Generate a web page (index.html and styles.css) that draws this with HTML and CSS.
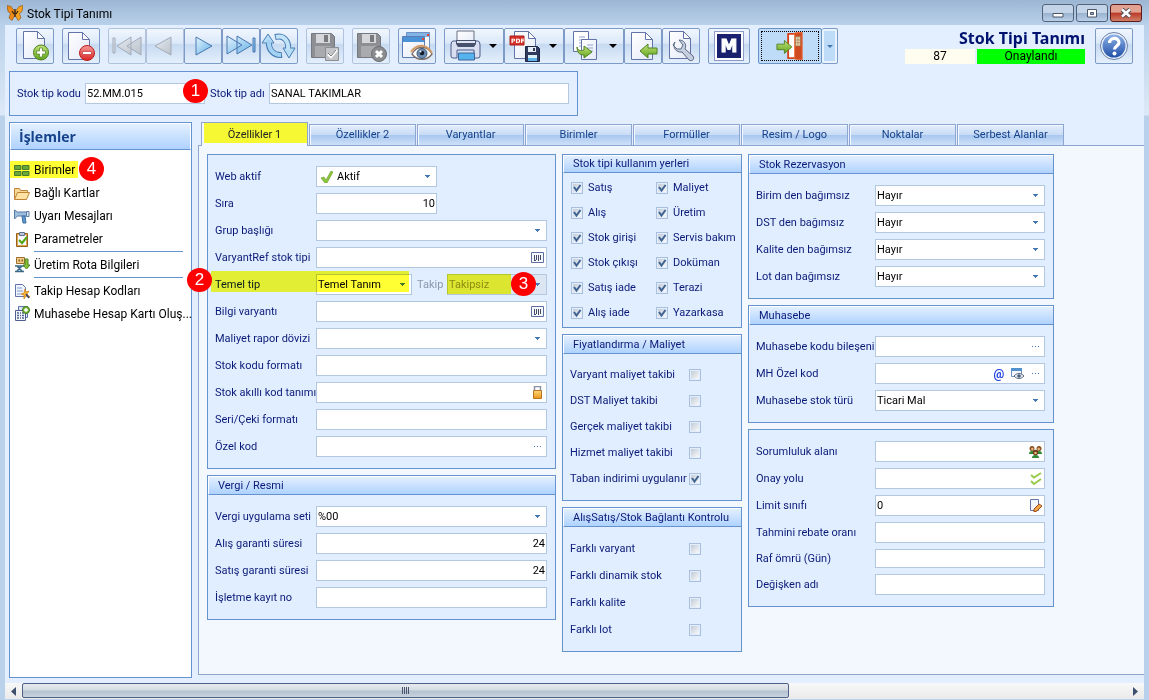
FILE: index.html
```html
<!DOCTYPE html>
<html lang="tr">
<head>
<meta charset="utf-8">
<title>Stok Tipi Tanımı</title>
<link rel="stylesheet" href="styles.css">
</head>
<body>
<svg class="defs" aria-hidden="true">
  <defs>
    <linearGradient id="g-blue" x1="0" y1="0" x2="1" y2="1"><stop offset="0" stop-color="#e4f4fd"/><stop offset="1" stop-color="#5eaee6"/></linearGradient>
    <linearGradient id="g-gray" x1="0" y1="0" x2="1" y2="1"><stop offset="0" stop-color="#e8edf3"/><stop offset="1" stop-color="#b9c1ca"/></linearGradient>
    <linearGradient id="g-page" x1="0" y1="0" x2="1" y2="1"><stop offset="0" stop-color="#fff"/><stop offset="1" stop-color="#e3e9f6"/></linearGradient>
    <linearGradient id="g-green" x1="0" y1="0" x2="0" y2="1"><stop offset="0" stop-color="#c4e27a"/><stop offset="1" stop-color="#5fa31c"/></linearGradient>
    <linearGradient id="g-red" x1="0" y1="0" x2="0" y2="1"><stop offset="0" stop-color="#f79a9a"/><stop offset="1" stop-color="#d92424"/></linearGradient>
    <linearGradient id="g-help" x1="0" y1="0" x2="0" y2="1"><stop offset="0" stop-color="#8fb2e6"/><stop offset="1" stop-color="#1f4fa8"/></linearGradient>
    <linearGradient id="g-gold" x1="0" y1="0" x2="0" y2="1"><stop offset="0" stop-color="#ffd97a"/><stop offset="1" stop-color="#e8941a"/></linearGradient>
    <symbol id="page" viewBox="0 0 22 28"><path d="M.5.5h14l7 7v20H.5z" fill="url(#g-page)" stroke="#6373a8"/><path d="M14.500.5v7h7z" fill="#fff" stroke="#6373a8"/></symbol>
    <symbol id="floppy" viewBox="0 0 24 25"><path d="M.5.5h20l3 3v21H.5z" fill="#8d8f94" stroke="#77797e"/><path d="M5 1h14v9H5z" fill="#d5d7da"/><path d="M13 2h4v7h-4z" fill="#77797e"/><path d="M4 13h16v11H4z" fill="#a8aaae"/></symbol>
    <symbol id="barcode" viewBox="0 0 13 12"><path d="M.5.5h12v10H.5z" fill="#f5f8fd" stroke="#5f6fa5"/><path d="M3.500 3v5M5.500 3v5M7.500 3v5M9.500 3v5" stroke="#444a68"/><path d="M3 8.500h2M7 8.500h1" stroke="#444a68"/></symbol>
    <symbol id="dots" viewBox="0 0 9 3"><path d="M1 1h1v1H1zM4 1h1v1H4zM7 1h1v1H7z" fill="#4a78b4"/></symbol>
  </defs>
</svg>

<div class="window">
  <header class="titlebar">
    <svg class="logo" width="16" height="16" viewBox="0 0 16 16"><path d="M7.500 6L4 1.500 0 .5l1 6 2.500 2L2 13l3 2.500L7.500 11z" fill="#ef8b17" stroke="#8c4a08" stroke-width=".6"/><path d="M8.500 6L12 1.500l4-1-1 6-2.500 2L14 13l-3 2.500L8.500 11z" fill="#f7a321" stroke="#8c4a08" stroke-width=".6"/><path d="M8 4v8M5 6l2 3M11 6L9 9" stroke="#3a220c" stroke-width="1.300"/></svg>
    <h1>Stok Tipi Tanımı</h1>
    <div class="caption-buttons">
      <button type="button" aria-label="Simge durumuna küçült"><svg width="30" height="16" viewBox="0 0 30 16"><path d="M10 8.500h10v3.500H10z" fill="#fff" stroke="#4d5768"/></svg></button>
      <button type="button" aria-label="Önceki boyut"><svg width="30" height="16" viewBox="0 0 30 16"><path d="M10.500 4.500h9v7.500h-9z" fill="#fff" stroke="#4d5768"/><path d="M13.500 7.500h3v2h-3z" fill="#9db4d0" stroke="#4d5768"/></svg></button>
      <button type="button" class="close" aria-label="Kapat"><svg width="30" height="16" viewBox="0 0 30 16"><path d="M11 4.500l8 7M19 4.500l-8 7" stroke="#54505a" stroke-width="4.500"/><path d="M11 4.500l8 7M19 4.500l-8 7" stroke="#fff" stroke-width="2.500"/></svg></button>
    </div>
  </header>

  <div class="client">
    <div class="toolbar">
      <div class="group">
        <button type="button" aria-label="Yeni"><svg viewBox="0 0 36 34"><use href="#page" x="6" y="2" width="22" height="28"/><circle cx="24" cy="23.500" r="7.500" fill="url(#g-green)" stroke="#4c7f1c"/><path d="M22.500 19h3v3h3v3h-3v3h-3v-3h-3v-3h3z" fill="#fff" stroke="#4c7f1c" stroke-width=".7"/></svg></button>
      </div>
      <div class="group">
        <button type="button" aria-label="Sil"><svg viewBox="0 0 36 34"><use href="#page" x="5" y="3" width="22" height="28"/><circle cx="24" cy="24" r="7.500" fill="url(#g-red)" stroke="#b81e1e"/><path d="M19.500 22.500h9v3h-9z" fill="#fff" stroke="#b81e1e" stroke-width=".6"/></svg></button>
      </div>
      <div class="group">
        <button type="button" disabled aria-label="İlk"><svg viewBox="0 0 36 34"><g fill="url(#g-gray)" stroke="#a3abb8"><path d="M4 9h2v15H4zM22 8v18L8 17zM32 8v18l-14-9z"/></g></svg></button>
        <button type="button" disabled aria-label="Önceki"><svg viewBox="0 0 36 34"><path d="M24 8v18L8 17z" fill="url(#g-gray)" stroke="#a3abb8"/></svg></button>
        <button type="button" aria-label="Sonraki"><svg viewBox="0 0 36 34"><path d="M11 8v18l16-9z" fill="url(#g-blue)" stroke="#4a77b0"/></svg></button>
        <button type="button" aria-label="Son"><svg viewBox="0 0 36 34"><g fill="url(#g-blue)" stroke="#4a77b0"><path d="M4 7v18l15-9zM14 7v18l15-9zM30 9h2v14h-2z"/></g></svg></button>
        <button type="button" aria-label="Yenile"><svg viewBox="0 0 36 34"><path d="M8 12c-1 9 5 15 13 14" fill="none" stroke="#4a7fb4" stroke-width="6"/><path d="M14 8c9-2 14 4 13 12" fill="none" stroke="#4a7fb4" stroke-width="6"/><path d="M7 5l6 9H1zM28 29l-6-10h12z" fill="#b5dcf5" stroke="#4a7fb4"/><path d="M8 11c-1 10 5 15 12 15" fill="none" stroke="#a3d2f2" stroke-width="4"/><path d="M15 8c8-2 13 4 12 13" fill="none" stroke="#c3e4f8" stroke-width="4"/></svg></button>
      </div>
      <div class="group">
        <button type="button" disabled aria-label="Kaydet"><svg viewBox="0 0 36 34"><use href="#floppy" x="4" y="4" width="24" height="25"/><path d="M18.500 18.500h13v13h-13z" fill="#c2c4c8" stroke="#8b8d92"/><path d="M21 25l3 3 6-7" fill="none" stroke="#fff" stroke-width="2.500"/><path d="M21 24l3 3 5-6" fill="none" stroke="#777"/></svg></button>
      </div>
      <div class="group">
        <button type="button" disabled aria-label="Kaydetme"><svg viewBox="0 0 36 34"><use href="#floppy" x="4" y="4" width="24" height="25"/><circle cx="26" cy="25" r="7.500" fill="#8a8c90" stroke="#6c6e72"/><path d="M23 22l6 6M29 22l-6 6" stroke="#fff" stroke-width="3"/></svg></button>
      </div>
      <div class="group">
        <button type="button" aria-label="Görünüm"><svg viewBox="0 0 36 34"><path d="M7.500 3.500h23V24h-23z" fill="#f5f9ff" stroke="#6d8fc4"/><path d="M8 4h22v4H8z" fill="#83b4e6"/><path d="M3.500 7.500h22v21h-22z" fill="url(#g-page)" stroke="#5a7bb4"/><path d="M4 8h21v5H4z" fill="#4b92d6"/><path d="M28 5h2v2h-2zM23 9h2v2h-2z" fill="#e4452a"/><path d="M13 25c5-9 15-9 20 0-5 7-15 7-20 0z" fill="#fff" stroke="#7b6c67" stroke-width="1.300"/><path d="M12 23c6-9 16-8 21 1" fill="none" stroke="#d39a61" stroke-width="1.800"/><circle cx="23" cy="24.500" r="5" fill="#6d8cb0" stroke="#3b5778"/><circle cx="23" cy="24" r="2.300" fill="#111c2c"/><circle cx="21.500" cy="22.500" r="1" fill="#fff"/></svg></button>
      </div>
      <div class="group">
        <button type="button" class="wide" aria-label="Yazdır"><svg viewBox="0 0 36 34"><path d="M11 2h17v14H11z" fill="url(#g-page)" stroke="#6a6f80"/><path d="M7 12q-2 0-2 4v11q0 2 2 2h4v-8h17v8h4q2 0 2-2V16q0-4-2-4h-3l-2 4H13l-3-4z" fill="#d9dff0" stroke="#4c5a88"/><path d="M10 11h20v4l-2 3H12l-2-3z" fill="#47516e"/><path d="M11 12h18v2H11z" fill="#dfe4f0"/><path d="M12.500 24h16v7h-16z" fill="#55b4ed" stroke="#426399"/></svg><i class="arrow"></i></button>
        <button type="button" class="wide" aria-label="PDF kaydet"><svg viewBox="0 0 36 34"><use href="#page" x="8" y="2" width="22" height="28"/><path d="M4 7h14v9H4z" fill="#d7322a" stroke="#a91d18"/><text x="5" y="14" class="pdf">PDF</text><path d="M19.500 17.500h12l2 2v13h-14z" fill="#2f3a5e" stroke="#1e2747"/><path d="M22 18h8v5h-8z" fill="#e6edf7"/><path d="M27 19h2v3h-2z" fill="#2f3a5e"/><path d="M22 26h9v6h-9z" fill="#d9f0fb"/><path d="M22 29h9v3h-9z" fill="#5fb5e8"/></svg><i class="arrow"></i></button>
        <button type="button" class="wide" aria-label="Kopyala"><svg viewBox="0 0 36 34"><path d="M7.500 2.500h15v20h-15z" fill="#fff" stroke="#6373a8"/><path d="M13 8h6M13 11h6M13 14h6M13 17h6" stroke="#8fa4cf"/><path d="M15.500 10.500h15v20h-15z" fill="url(#g-page)" stroke="#6373a8"/><path d="M21 16h6M21 19h6M21 22h6" stroke="#8fa4cf"/><path d="M11 18c1 4 4 4 7 3v-4l8 6-8 6v-3c-5 0-7-3-7-8z" fill="url(#g-green)" stroke="#4f8222"/></svg><i class="arrow"></i></button>
        <button type="button" aria-label="İçeri al"><svg viewBox="0 0 36 34"><use href="#page" x="6" y="3" width="22" height="28"/><path d="M15 22l8-7v4h9v6h-9v4z" fill="url(#g-green)" stroke="#4f8222"/></svg></button>
        <button type="button" aria-label="Ayarlar"><svg viewBox="0 0 36 34"><use href="#page" x="6" y="2" width="22" height="28"/><path d="M12 13c-3 5 1 11 7 10l7 8c3 2 6-1 4-4l-8-7c2-5-1-9-6-9l4 5-2 4-4 0-4-4z" fill="#c5cfdf" stroke="#5b6885"/></svg></button>
      </div>
      <div class="group">
        <button type="button" class="m-button" aria-label="Modül"><span>M</span></button>
      </div>
      <div class="group exit">
        <button type="button" class="door" aria-label="Çıkış"><svg viewBox="0 0 56 30"><path d="M26 2h14v26H26z" fill="#fff" stroke="#d7441a" stroke-width="2"/><path d="M33 1l8-1v30l-8-1z" fill="#cf4a20" stroke="#e86b3a"/><path d="M34 5h5v10h-5z" fill="#f0d9b6" stroke="#9a7a50" stroke-width=".7"/><path d="M36.500 5v10M34 8.500h5M34 11.500h5" stroke="#9a7a50" stroke-width=".7"/><path d="M14 13h8V9l8 7-8 7v-4h-8z" fill="url(#g-green)" stroke="#4f8222"/></svg></button>
        <button type="button" class="drop" aria-label="Çıkış seçenekleri"><i class="arrow"></i></button>
      </div>
      <div class="heading">
        <h2>Stok Tipi Tanımı</h2>
        <div class="status"><span class="number">87</span><span class="approved">Onaylandı</span></div>
      </div>
      <button type="button" class="help" aria-label="Yardım"><svg viewBox="0 0 36 34"><circle cx="18" cy="17" r="13.500" fill="#e9f1fc" stroke="#6a7fa6"/><circle cx="18" cy="17" r="11.500" fill="url(#g-help)"/><path d="M13.500 14c0-6 9.500-6 9.500-.5 0 3.500-4.500 3.500-4.500 7" fill="none" stroke="#fff" stroke-width="3.200"/><circle cx="18.500" cy="24.500" r="2" fill="#fff"/></svg></button>
    </div>

    <div class="keys">
      <label for="kod">Stok tip kodu</label>
      <div class="field code"><input id="kod" type="text" value="52.MM.015"><b class="marker m1">1</b></div>
      <label for="ad">Stok tip adı</label>
      <div class="field"><input id="ad" type="text" value="SANAL TAKIMLAR"></div>
    </div>

    <div class="main">
      <nav class="sidebar">
        <h2>İşlemler</h2>
        <ul>
          <li><a href="#" class="marked"><svg width="16" height="16" viewBox="0 0 16 16"><path d="M.5 3.500h6.500v4H.5zM8.500 3.500H15v4H8.500zM.5 9.500h6.500v4H.5zM8.500 9.500H15v4H8.500z" fill="#67a839" stroke="#4a7a2c"/></svg>Birimler</a><b class="marker m4">4</b></li>
          <li><a href="#"><svg width="16" height="16" viewBox="0 0 16 16"><path d="M.5 14V3.500h5l1 2h7V8" fill="#f7d99a" stroke="#bd8436"/><path d="M.5 14.500l3-7h12l-3 7z" fill="#ffe2a4" stroke="#bd8436"/></svg>Bağlı Kartlar</a></li>
          <li><a href="#"><svg width="16" height="16" viewBox="0 0 16 16"><path d="M.5 2v9l3-3h9V4h-9z" fill="#9dbfe0" stroke="#587ba4"/><path d="M12.500 3.500H15v5h-2.500z" fill="#dce8f4" stroke="#587ba4"/><path d="M8 8l1 7h3l-1-7z" fill="#5a9ad4" stroke="#3f6ea0"/></svg>Uyarı Mesajları</a></li>
          <li><a href="#"><svg width="16" height="16" viewBox="0 0 16 16"><path d="M2.500 2.500h11v13h-11z" fill="#dfa750" stroke="#94611e"/><path d="M4 4h8v10H4z" fill="#f6f8ff"/><path d="M5.500 1.500h5v3h-5z" fill="#bac6dc" stroke="#65708a"/><path d="M5 9l3 3 5-6" fill="none" stroke="#55a818" stroke-width="2.200"/></svg>Parametreler</a></li>
          <li class="split"><a href="#"><svg width="16" height="16" viewBox="0 0 16 16"><path d="M2.500.5h8v6h-8z" fill="#f1cf8a" stroke="#9b6c2c"/><path d="M4.500 2.500h1.500v2H4.500zM7.500 2.500H9v2H7.500z" fill="#8b5c22"/><path d="M1 9h9M1 14.500h9M3 9l5 5M8 9l-5 5" stroke="#3a6a88" stroke-width="1.500"/><path d="M11 2h3v6h2l-3.500 4L9 8h2z" fill="#86c034" stroke="#4f8222"/></svg>Üretim Rota Bilgileri</a></li>
          <li class="split"><a href="#"><svg width="16" height="16" viewBox="0 0 16 16"><path d="M1.500 1.500h7l3 3v9h-10z" fill="#f0f4ff" stroke="#6373a8"/><path d="M3 5h5M3 8h6M3 11h4" stroke="#7f9bd0"/><path d="M11 6l1 3 3-1-2 3 3 3-4-1-2 3v-4l-3-1 3-1z" fill="#ffb733" stroke="#c77813" stroke-width=".7"/><path d="M12 11l3 4" stroke="#30406f" stroke-width="1.500"/></svg>Takip Hesap Kodları</a></li>
          <li><a href="#"><svg width="16" height="16" viewBox="0 0 16 16"><path d="M4.500.5h9v11h-9z" fill="#dbe4f5" stroke="#6373a8"/><path d="M1.500 4.500h10v10h-10z" fill="#f3f6fd" stroke="#50608e"/><path d="M3 7h2M6 7h1M8 7h2M3 9.500h2M6 9.500h1M8 9.500h2M3 12h2M6 12h1M8 12h2" stroke="#53648f" stroke-width="1.300"/><circle cx="12" cy="4" r="3.500" fill="#79ba39" stroke="#467a1d"/><path d="M12 2v4M10 4h4" stroke="#fff" stroke-width="1.300"/></svg>Muhasebe Hesap Kartı Oluş...</a></li>
        </ul>
      </nav>

      <div class="tabs">
        <div class="tablist" role="tablist">
          <button type="button" role="tab" class="active" aria-selected="true">Özellikler 1</button>
          <button type="button" role="tab">Özellikler 2</button>
          <button type="button" role="tab">Varyantlar</button>
          <button type="button" role="tab">Birimler</button>
          <button type="button" role="tab">Formüller</button>
          <button type="button" role="tab">Resim / Logo</button>
          <button type="button" role="tab">Noktalar</button>
          <button type="button" role="tab">Serbest Alanlar</button>
        </div>

        <form class="pane" role="tabpanel">
          <div class="column">
            <section class="panel first">
              <div class="row short"><label for="web">Web aktif</label><div class="field"><svg class="tick" width="12" height="12" viewBox="0 0 12 12"><path d="M0 7l3-1 2 3L10 0l2 1-6 11H4z" fill="#8cc63f" stroke="#6a9c2c" stroke-width=".6"/></svg><select id="web"><option>Aktif</option></select></div></div>
              <div class="row short"><label for="sira">Sıra</label><div class="field"><input id="sira" class="number" type="text" value="10"></div></div>
              <div class="row"><label for="grup">Grup başlığı</label><div class="field"><select id="grup"><option></option></select></div></div>
              <div class="row"><label for="vref">VaryantRef stok tipi</label><div class="field"><input id="vref" type="text"><button type="button" aria-label="Seç"><svg width="13" height="12"><use href="#barcode"/></svg></button></div></div>
              <div class="row split-row"><label for="temel">Temel tip</label><div class="field base"><select id="temel"><option>Temel Tanım</option></select></div><label class="off" for="takip">Takip</label><div class="field disabled"><select id="takip" disabled><option>Takipsiz</option></select><b class="marker m3">3</b></div><b class="marker m2">2</b></div>
              <div class="row"><label for="bilgi">Bilgi varyantı</label><div class="field"><input id="bilgi" type="text"><button type="button" aria-label="Seç"><svg width="13" height="12"><use href="#barcode"/></svg></button></div></div>
              <div class="row"><label for="doviz">Maliyet rapor dövizi</label><div class="field"><select id="doviz"><option></option></select></div></div>
              <div class="row"><label for="format">Stok kodu formatı</label><div class="field"><input id="format" type="text"></div></div>
              <div class="row"><label for="akilli">Stok akıllı kod tanımı</label><div class="field"><input id="akilli" type="text"><button type="button" aria-label="Kilit"><svg width="13" height="13" viewBox="0 0 13 13"><path d="M3.500 5V.5h6V5" fill="none" stroke="#8a93a5" stroke-width="1.500"/><path d="M2.500 4.500h8v8h-8z" fill="url(#g-gold)" stroke="#b87420"/></svg></button></div></div>
              <div class="row"><label for="seri">Seri/Çeki formatı</label><div class="field"><input id="seri" type="text"></div></div>
              <div class="row"><label for="ozel">Özel kod</label><div class="field"><input id="ozel" type="text"><button type="button" aria-label="Seç"><svg width="13" height="3" viewBox="-2 0 13 3"><use href="#dots" width="9" height="3"/></svg></button></div></div>
            </section>
            <section class="panel">
              <h3>Vergi / Resmi</h3>
              <div class="row"><label for="vergi">Vergi uygulama seti</label><div class="field"><select id="vergi"><option>%00</option></select></div></div>
              <div class="row"><label for="alisg">Alış garanti süresi</label><div class="field"><input id="alisg" class="number" type="text" value="24"></div></div>
              <div class="row"><label for="satisg">Satış garanti süresi</label><div class="field"><input id="satisg" class="number" type="text" value="24"></div></div>
              <div class="row"><label for="isletme">İşletme kayıt no</label><div class="field"><input id="isletme" type="text"></div></div>
            </section>
          </div>

          <div class="column">
            <section class="panel usage">
              <h3>Stok tipi kullanım yerleri</h3>
              <div class="checks">
                <label><input type="checkbox" checked>Satış</label>
                <label><input type="checkbox" checked>Maliyet</label>
                <label><input type="checkbox" checked>Alış</label>
                <label><input type="checkbox" checked>Üretim</label>
                <label><input type="checkbox" checked>Stok girişi</label>
                <label><input type="checkbox" checked>Servis bakım</label>
                <label><input type="checkbox" checked>Stok çıkışı</label>
                <label><input type="checkbox" checked>Doküman</label>
                <label><input type="checkbox" checked>Satış iade</label>
                <label><input type="checkbox" checked>Terazi</label>
                <label><input type="checkbox" checked>Alış iade</label>
                <label><input type="checkbox" checked>Yazarkasa</label>
              </div>
            </section>
            <section class="panel pricing">
              <h3>Fiyatlandırma / Maliyet</h3>
              <div class="options">
                <label><span>Varyant maliyet takibi</span><input type="checkbox"></label>
                <label><span>DST Maliyet takibi</span><input type="checkbox"></label>
                <label><span>Gerçek maliyet takibi</span><input type="checkbox"></label>
                <label><span>Hizmet maliyet takibi</span><input type="checkbox"></label>
                <label><span>Taban indirimi uygulanır</span><input type="checkbox" checked></label>
              </div>
            </section>
            <section class="panel">
              <h3>AlışSatış/Stok Bağlantı Kontrolu</h3>
              <div class="options">
                <label><span>Farklı varyant</span><input type="checkbox"></label>
                <label><span>Farklı dinamik stok</span><input type="checkbox"></label>
                <label><span>Farklı kalite</span><input type="checkbox"></label>
                <label><span>Farklı lot</span><input type="checkbox"></label>
              </div>
            </section>
          </div>

          <div class="column right">
            <section class="panel">
              <h3>Stok Rezervasyon</h3>
              <div class="row"><label for="birim">Birim den bağımsız</label><div class="field"><select id="birim"><option>Hayır</option></select></div></div>
              <div class="row"><label for="dst">DST den bağımsız</label><div class="field"><select id="dst"><option>Hayır</option></select></div></div>
              <div class="row"><label for="kalite">Kalite den bağımsız</label><div class="field"><select id="kalite"><option>Hayır</option></select></div></div>
              <div class="row"><label for="lot">Lot dan bağımsız</label><div class="field"><select id="lot"><option>Hayır</option></select></div></div>
            </section>
            <section class="panel">
              <h3>Muhasebe</h3>
              <div class="row"><label for="bilesen">Muhasebe kodu bileşeni</label><div class="field"><input id="bilesen" type="text"><button type="button" aria-label="Seç"><svg width="13" height="3" viewBox="-2 0 13 3"><use href="#dots" width="9" height="3"/></svg></button></div></div>
              <div class="row"><label for="mh">MH Özel kod</label><div class="field"><input id="mh" type="text"><button type="button" class="at">@</button><button type="button" aria-label="Göster"><svg width="13" height="12" viewBox="0 0 13 12"><path d="M.5.5h10v8H.5z" fill="#f4f8ff" stroke="#6f8dbd"/><path d="M0 0h11v3H0z" fill="#5291cd"/><path d="M3 8c3-3.500 7-3.500 10 0-3 3.500-7 3.500-10 0z" fill="#dfe5ee" stroke="#626e80"/><circle cx="8" cy="8" r="1.800" fill="#48607f"/></svg></button><button type="button" aria-label="Seç"><svg width="13" height="3" viewBox="-2 0 13 3"><use href="#dots" width="9" height="3"/></svg></button></div></div>
              <div class="row"><label for="tur">Muhasebe stok türü</label><div class="field"><select id="tur"><option>Ticari Mal</option></select></div></div>
            </section>
            <section class="panel first">
              <div class="row"><label for="sorumlu">Sorumluluk alanı</label><div class="field"><input id="sorumlu" type="text"><button type="button" aria-label="Kişiler"><svg width="13" height="13" viewBox="0 0 13 13"><path d="M0 9q0-3 3-3t3 3zM7 9q0-3 3-3t3 3zM3 13q0-3 3.500-3t3.500 3z" fill="#2f8a35"/><circle cx="3" cy="3.500" r="2.500" fill="#8a5225"/><circle cx="10" cy="3.500" r="2.500" fill="#8a5225"/><circle cx="6.500" cy="7.500" r="2.700" fill="#6b3c17"/><circle cx="3.300" cy="4" r="1.200" fill="#e8b97e"/><circle cx="9.700" cy="4" r="1.200" fill="#e8b97e"/><circle cx="6.500" cy="8" r="1.300" fill="#e8b97e"/></svg></button></div></div>
              <div class="row"><label for="onay">Onay yolu</label><div class="field"><input id="onay" type="text"><button type="button" aria-label="Onay"><svg width="13" height="13" viewBox="0 0 13 13"><path d="M2 3l3 2.500L12 1M2 9l3 3 7-5" fill="none" stroke="#9acb4c" stroke-width="2"/></svg></button></div></div>
              <div class="row"><label for="limit">Limit sınıfı</label><div class="field"><input id="limit" type="text" value="0"><button type="button" aria-label="Düzenle"><svg width="13" height="13" viewBox="0 0 13 13"><path d="M1.500.5h8v11h-8z" fill="#f3f6ff" stroke="#6373a8"/><path d="M5 10l5-5 3 2-5 5-3 1z" fill="#f0a347" stroke="#9a4e1c"/></svg></button></div></div>
              <div class="row"><label for="rebate">Tahmini rebate oranı</label><div class="field"><input id="rebate" type="text"></div></div>
              <div class="row"><label for="raf">Raf ömrü (Gün)</label><div class="field low"><input id="raf" type="text"></div></div>
              <div class="row"><label for="degisken">Değişken adı</label><div class="field"><input id="degisken" type="text"></div></div>
            </section>
          </div>
        </form>
      </div>
    </div>

    <div class="scrollbar">
      <button type="button" aria-label="Sola kaydır"><svg width="5" height="9" viewBox="0 0 5 9"><path d="M5 0v9L0 4.500z" fill="#3f506e"/></svg></button>
      <div class="track"><div class="thumb"></div></div>
      <button type="button" aria-label="Sağa kaydır"><svg width="5" height="9" viewBox="0 0 5 9"><path d="M0 0v9l5-4.500z" fill="#3f506e"/></svg></button>
    </div>
  </div>
</div>
</body>
</html>
```
FILE: styles.css
```css
* { box-sizing: border-box; }
body { margin: 0; background: #B9D1EA; color: #0A1A78; font: 11px/14px Roboto, "Noto Sans", sans-serif; }
h1, h2, h3 { margin: 0; }
button, input, select { margin: 0; padding: 0; border: 0; border-radius: 0; background: none; color: inherit; font: inherit; }
button { display: flex; align-items: center; justify-content: center; }
svg { flex: none; display: block; }
.defs { position: absolute; width: 0; height: 0; }

.window { display: flex; flex-direction: column; min-height: 100vh; padding: 0 5px 1px; background: linear-gradient(#9CB6D3, #B9D1EA 25px, #DCE9F7 115px, #B9D1EA 116px); }
.titlebar { display: flex; align-items: center; height: 25px; padding: 0 2px; color: #000; }
.titlebar h1 { flex: 1; margin-left: 4px; padding-top: 2px; font-size: 12px; font-weight: normal; }
.caption-buttons { display: flex; gap: 2px; }
.caption-buttons button { width: 32px; height: 18px; border: 1px solid #53637A; border-radius: 3px; background: linear-gradient(#C3D4E8 48%, #98B1CD 50%, #B9D0E8); }
.caption-buttons .close { border-color: #5A1A1A; background: linear-gradient(#E3A192 45%, #BB3926 50%, #D0806A); }

.client { display: flex; flex: 1; flex-direction: column; background: #E3EFFF; }

.toolbar { display: flex; gap: 8px; padding: 3px 11px 0; }
.group { display: flex; }
.toolbar button { width: 38px; height: 36px; border: 1px solid #7D9BC6; border-radius: 2px; background: linear-gradient(#F0F6FE, #DCE9F9 42%, #C6DAF1 45%, #E4EFFC); }
.toolbar button svg { width: 36px; height: 34px; }
.toolbar button:disabled { border-color: #B0C2DC; }
.toolbar .wide { width: 60px; }
.arrow { width: 0; border: 4px solid transparent; border-top-color: #000; border-bottom: 0; }
.wide .arrow { margin: 0 5px 0 7px; }
.toolbar .m-button { width: 42px; }
.m-button span { width: 28px; height: 28px; border: 2px solid #fff; outline: 1px solid #8E9BC8; background: #19206D; color: #fff; font: bold 17px/24px "DejaVu Sans", sans-serif; -webkit-text-stroke: 1px #FFF; }
.toolbar .door { width: 64px; border-color: #6B92C6; background: #BEDCF8; }
.toolbar .door svg { width: 56px; height: 28px; outline: 1px dotted #000; }
.toolbar .drop { width: 16px; border-left: 0; background: #BEDCF8; box-shadow: inset 0 0 0 2px #E9F3FE; }
.drop .arrow { border-width: 3px; border-bottom: 0; border-top-color: #4378B4; }
.pdf { fill: #fff; font: bold 6px "DejaVu Sans", sans-serif; }
.heading { margin-left: auto; }
.heading h2 { color: #001270; font: bold 16px/21px "Noto Sans", sans-serif; text-align: right; }
.status { display: flex; gap: 2px; color: #000; font-size: 12px; line-height: 15px; text-align: center; }
.status .number { width: 70px; background: #FFFCF0; }
.status .approved { width: 108px; background: #0F0; }
.toolbar .help { margin-left: 2px; }

.keys { display: flex; align-items: center; width: 569px; height: 45px; margin: 7px 4px 6px; padding: 0 8px 0 7px; border: 1px solid #6593CF; }
.keys label { flex: none; width: 68px; }
.keys label + .field + label { width: 59px; margin-left: 5px; }
.keys .code { flex: none; width: 120px; }

.field { position: relative; display: flex; flex: 1; align-items: center; min-width: 0; height: 21px; border: 1px solid #B3C7E1; background: #FFF; color: #000; }
.field.low { height: 19px; }
.field input, .field select { flex: 1; width: 100%; min-width: 0; height: 100%; padding: 0 1px; outline: 0; }
.field select { padding-right: 18px; appearance: none; background: url("data:image/svg+xml,%3Csvg xmlns='http://www.w3.org/2000/svg' width='5' height='3'%3E%3Cpath d='M0 0h5v1H4v1H3v1H2V2H1V1H0z' fill='%234378b4'/%3E%3C/svg%3E") no-repeat right 6px center; }
.field input.number { text-align: right; }
.field button { width: 18px; height: 19px; }
.field .at { color: #1C3FE0; font-size: 12px; font-weight: bold; }
.tick { margin: 0 3px 0 4px; }

.main { display: flex; flex: 1; gap: 6px; padding-left: 4px; }
.sidebar { flex: none; width: 183px; margin-bottom: 5px; border: 1px solid #6593CF; background: #FFF; color: #000; }
.sidebar h2 { height: 27px; padding-left: 8px; border: 1px solid #FFF; border-bottom-color: #6593CF; background: linear-gradient(#E3EFFF, #AFD2FF); color: #15428B; font: bold 14px/25px "Open Sans", sans-serif; }
.sidebar ul { margin: 0; padding: 8px 0; list-style: none; }
.sidebar li { position: relative; margin-right: 1px; }
.sidebar .split { margin-top: 1px; }
.sidebar .split::before { display: block; margin: 0 7px 2px 24px; border-top: 1px solid #6593CF; content: ""; }
.sidebar .split a { margin-top: -1px; }
.sidebar a { display: flex; align-items: center; gap: 4px; height: 23px; padding-left: 4px; color: #000; font-size: 12px; text-decoration: none; white-space: nowrap; }
.sidebar .marked { width: 68px; background: linear-gradient(#FF3, #FF3) no-repeat 0 3px / 100% 17px; }

.tabs { display: flex; flex: 1; flex-direction: column; min-width: 0; margin-bottom: 8px; }
.tablist { position: relative; display: flex; align-items: flex-end; gap: 1px; height: 24px; margin-bottom: -1px; padding-left: 3px; }
.tablist button { flex: 0 1 107px; height: 22px; border: 1px solid #8DA5CF; background: linear-gradient(#E3EDFB, #C9DCF5 48%, #A9C8F0 52%, #CDE0F8); box-shadow: inset 1px 1px #F3F8FF; color: #15428B; }
.tablist .active { height: 24px; border-bottom: 0; background: linear-gradient(#F5F833, #F5F833) no-repeat 2px 0 / 103px 20px #F3F7FE; box-shadow: none; color: #222; }
.pane { display: grid; flex: 1; grid-template-columns: 349fr 180fr 306fr 84fr; align-items: start; gap: 6px; padding: 8px 0 21px 8px; border: solid #8DA5CF; border-width: 1px 0 1px 1px; background: #F3F7FE; }
.column { display: grid; gap: 6px; }

.panel { padding-bottom: 5px; border: 1px solid #6593CF; background: #E1EEFF; }
.panel.first { padding-top: 11px; }
.panel h3 { height: 19px; margin-bottom: 11px; padding-left: 9px; border: 1px solid #FFF; border-width: 1px 0 1px 1px; border-bottom-color: #6593CF; background: linear-gradient(#E3EFFF, #AFD2FF); font-size: 11px; font-weight: normal; line-height: 17px; }
.row { position: relative; display: flex; align-items: center; margin: 0 8px 6px 7px; white-space: nowrap; }
.row > label:first-child { flex: none; width: 101px; }
.row.short .field { flex: 0 1 121px; }
.right .row > label:first-child { width: 119px; }

.split-row .base { flex: 0 1 96px; }
.split-row .off { width: 35px; padding-left: 5px; color: #8B97AE; }
.field.disabled { background: #DCE6F3; color: #7C8798; }
.field select:disabled { opacity: 1; color: #8C8C50; }
.split-row::before { position: absolute; z-index: 1; top: -3px; left: -4px; width: 198px; height: 21px; background: #FF3; mix-blend-mode: multiply; pointer-events: none; content: ""; }
.disabled::before { position: absolute; top: -1px; left: -1px; width: 64px; height: 20px; background: #FF3; mix-blend-mode: multiply; content: ""; }

.marker { position: absolute; z-index: 2; width: 25px; height: 24px; border-radius: 50%; background: #F00; color: #FFF; font: 17px/24px "Liberation Sans", sans-serif; text-align: center; }
.m1 { top: -5px; right: -4px; }
.m2 { top: -6px; left: -28px; }
.m3 { top: -3px; right: 10px; }
.m4 { top: -1px; left: 69px; }

.checks { display: grid; grid-template-columns: 85px 1fr; padding-left: 8px; white-space: nowrap; }
.checks label { display: flex; align-items: center; gap: 5px; height: 25px; }
.usage { padding-bottom: 2px; }
.usage h3 { height: 18px; margin-bottom: 2px; line-height: 15px; }
.options { margin: -3px 0 3px; padding-left: 7px; }
.options label { display: flex; align-items: center; height: 27px; }
.options span { flex: 0 0 119px; white-space: nowrap; }
.pricing label { height: 26px; }
input[type="checkbox"] { width: 12px; height: 12px; padding: 1px; border: 1px solid #A9BFDC; appearance: none; background: linear-gradient(135deg, #C3CBD6, #F8F9FB) content-box #FFF; }
input[type="checkbox"]:checked { background: url("data:image/svg+xml,%3Csvg xmlns='http://www.w3.org/2000/svg' width='10' height='10'%3E%3Cpath d='M2 4l2.500 3.500L8.500 2' fill='none' stroke='%233d6394' stroke-width='2'/%3E%3C/svg%3E") no-repeat center, linear-gradient(135deg, #C3CBD6, #F8F9FB) content-box #FFF; }

.scrollbar { display: flex; height: 16px; background: linear-gradient(#F8F8F8, #EAEAEA); }
.scrollbar button { width: 17px; }
.track { flex: 1; }
.thumb { width: calc(100% * 25 / 36); height: 15px; border: 1px solid #4F6186; border-radius: 2px; background: linear-gradient(#E6EAEE, #D5DCE3 45%, #B4C2D1 55%, #C8D3DF); }
.thumb::before { display: block; width: 8px; height: 7px; margin: 3px auto; background: repeating-linear-gradient(90deg, #47536C 0 1px, transparent 1px 2px); content: ""; }
```
